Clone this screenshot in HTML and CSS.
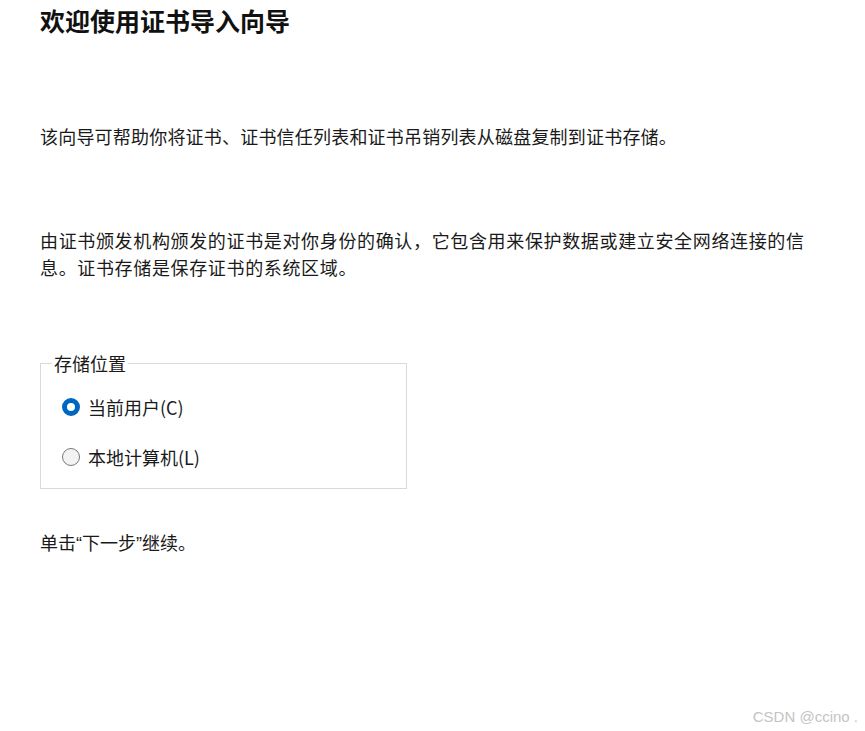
FILE: index.html
```html
<!DOCTYPE html>
<html lang="zh-CN">
<head>
<meta charset="utf-8">
<title>证书导入向导</title>
<link rel="stylesheet" href="styles.css">
</head>
<body>
<main class="wizard">
  <h1 class="title">欢迎使用证书导入向导</h1>
  <p class="para para-first">该向导可帮助你将证书、证书信任列表和证书吊销列表从磁盘复制到证书存储。</p>
  <p class="para para-second">由证书颁发机构颁发的证书是对你身份的确认，它包含用来保护数据或建立安全网络连接的信息。证书存储是保存证书的系统区域。</p>
  <fieldset class="group">
    <legend class="group-legend">存储位置</legend>
    <label class="option">
      <span class="radio radio-checked"></span>
      <span class="option-text">当前用户(C)</span>
    </label>
    <label class="option option-second">
      <span class="radio"></span>
      <span class="option-text">本地计算机(L)</span>
    </label>
  </fieldset>
  <p class="para para-last">单击<span class="quote">“</span>下一步<span class="quote">”</span>继续。</p>
</main>
<div class="watermark">CSDN @ccino .</div>
</body>
</html>
```

FILE: styles.css
```css
html, body {
  margin: 0;
  padding: 0;
  background: #ffffff;
}
body {
  width: 865px;
  height: 731px;
  position: relative;
  overflow: hidden;
  font-family: "Noto Sans CJK SC", "Noto Sans", sans-serif;
  color: #1a1a1a;
}
.wizard {
  padding: 2px 0 0 40px;
}
.title {
  margin: 0;
  font-size: 25px;
  line-height: 36px;
  font-weight: 700;
  color: #111;
}
.para {
  margin: 0;
  font-size: 18px;
  line-height: 27px;
}
.para-first {
  margin-top: 85px;
  letter-spacing: 0.2px;
}
.para-second {
  margin-top: 77px;
  letter-spacing: 0.65px;
  max-width: 778px;
}
.group {
  margin: 70px 0 0 0;
  width: 367px;
  box-sizing: border-box;
  border: 1px solid #d9d9d9;
  padding: 0 0 19px 11px;
}
.group-legend {
  padding: 0 2px;
  font-size: 18px;
  line-height: 24px;
}
.option {
  display: flex;
  align-items: center;
  height: 24px;
  margin-top: 20px;
  padding-left: 10px;
  font-size: 18px;
}
.option-second {
  margin-top: 26px;
}
.radio {
  width: 18px;
  height: 18px;
  box-sizing: border-box;
  border-radius: 50%;
  border: 1px solid #7a7a7a;
  background: #f3f3f3;
  margin-right: 8px;
  flex: none;
}
.radio-checked {
  border: 5px solid #0067c0;
  background: #ffffff;
}
.option-text {
  line-height: 24px;
}
.para-last {
  margin-top: 40px;
}
.quote {
  font-family: "Liberation Sans", Arial, sans-serif;
}
.watermark {
  position: absolute;
  right: 7px;
  bottom: 5px;
  font-family: "Liberation Sans", Arial, sans-serif;
  font-size: 15px;
  line-height: 18px;
  color: #c4c4c4;
}
```
